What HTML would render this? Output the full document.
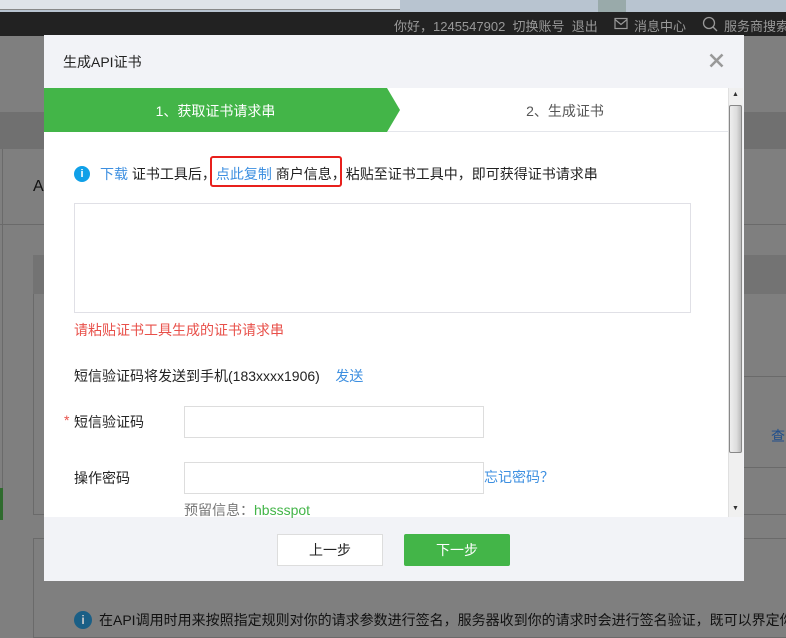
<!DOCTYPE html>
<html><head><meta charset="utf-8"><style>
*{margin:0;padding:0;box-sizing:border-box}
body{width:786px;height:628px;overflow:hidden;position:relative;background:#7f7f7f;font-family:"Liberation Sans","Noto Sans CJK SC",sans-serif;font-size:14px}
.a{position:absolute}
</style></head><body>
<div class="a" style="left:0;top:0;width:786px;height:12px;background:#b8c4d0"></div>
<div class="a" style="left:0;top:0;width:400px;height:10px;background:#dfe3e8;border-bottom:1px solid #888"></div>
<div class="a" style="left:598px;top:0;width:28px;height:12px;background:#9aa"></div>
<div class="a" style="left:0;top:12px;width:786px;height:24px;background:#222"></div>
<div class="a" style="left:394px;top:16px;color:#999;font-size:13px;white-space:nowrap">你好，1245547902 &nbsp;切换账号 &nbsp;退出</div>
<svg class="a" style="left:614px;top:17px" width="14" height="13"><rect x="1" y="1.5" width="12" height="10" fill="none" stroke="#999" stroke-width="1.2"/><path d="M1 2.5 L7 7.5 L13 2.5" fill="none" stroke="#999" stroke-width="1.2"/></svg>
<div class="a" style="left:634px;top:16px;color:#999;font-size:13px;white-space:nowrap">消息中心</div>
<svg class="a" style="left:702px;top:16px" width="16" height="16"><circle cx="7" cy="7" r="5.5" fill="none" stroke="#999" stroke-width="1.3"/><path d="M11 11 L15 15" stroke="#999" stroke-width="1.3"/></svg>
<div class="a" style="left:724px;top:16px;color:#999;font-size:13px;white-space:nowrap">服务商搜索</div>
<div class="a" style="left:0;top:112px;width:786px;height:37px;background:#707070"></div>
<div class="a" style="left:0;top:149px;width:3px;height:370px;border-right:1px solid #6a6a6a"></div>
<div class="a" style="left:33px;top:178px;font-size:16px;color:#111">A</div>
<div class="a" style="left:0;top:224px;width:786px;height:1px;background:#6a6a6a"></div>
<div class="a" style="left:33px;top:255px;width:760px;height:260px;border:1px solid #6a6a6a"></div>
<div class="a" style="left:33px;top:255px;width:760px;height:39px;background:#737373"></div>
<div class="a" style="left:744px;top:376px;width:42px;height:1px;background:#6a6a6a"></div>
<div class="a" style="left:744px;top:467px;width:42px;height:1px;background:#6a6a6a"></div>
<div class="a" style="left:771px;top:426px;color:#1f4e8c;font-size:14px">查</div>
<div class="a" style="left:0;top:488px;width:3px;height:32px;background:#2f6b2e"></div>
<div class="a" style="left:33px;top:538px;width:760px;height:100px;border:1px solid #6a6a6a"></div>
<div class="a" style="left:74px;top:611px;width:18px;height:18px;border-radius:50%;background:#1a5f86;color:#ccc;font-size:12px;text-align:center;line-height:18px;font-weight:bold">i</div>
<div class="a" style="left:99px;top:610px;width:687px;overflow:hidden;color:#111;font-size:14px;white-space:nowrap">在API调用时用来按照指定规则对你的请求参数进行签名，服务器收到你的请求时会进行签名验证，既可以界定你的身份</div>

<div class="a" style="left:44px;top:35px;width:700px;height:546px;background:#f2f3f7">
 <div class="a" style="left:19px;top:17px;font-size:14px;color:#222">生成API证书</div>
 <svg class="a" style="left:665px;top:18px" width="15" height="15"><path d="M1.5 1.5 L13.5 13.5 M13.5 1.5 L1.5 13.5" stroke="#999" stroke-width="2.6"/></svg>
 <div class="a" style="left:0;top:53px;width:685px;height:44px;background:#fff;border-bottom:1px solid #e4e6eb"></div>
 <svg class="a" style="left:0;top:53px" width="360" height="44"><polygon points="0,0 343,0 356,22 343,44 0,44" fill="#43b548"/></svg>
 <div class="a" style="left:0;top:54px;width:343px;height:44px;line-height:44px;text-align:center;color:#fff;font-size:14px">1、获取证书请求串</div>
 <div class="a" style="left:356px;top:54px;width:330px;height:44px;line-height:44px;text-align:center;color:#555;font-size:14px">2、生成证书</div>
 <div class="a" style="left:0;top:97px;width:685px;height:385px;background:#fff"></div>
 <div class="a" style="left:684px;top:53px;width:15px;height:429px;background:#f0f0f0;border-left:1px solid #e0e0e0"></div>
 <div class="a" style="left:688px;top:56px;font-size:7px;color:#333">▲</div>
 <div class="a" style="left:685px;top:70px;width:13px;height:348px;background:linear-gradient(90deg,#eee,#ddd 60%,#bbb);border:1px solid #888;border-radius:2px"></div>
 <div class="a" style="left:688px;top:470px;font-size:7px;color:#333">▼</div>
 <div class="a" style="left:30px;top:131px;width:16px;height:16px;border-radius:50%;background:#10a0e8;color:#fff;font-size:11px;font-weight:bold;text-align:center;line-height:16px">i</div>
 <div class="a" style="left:56px;top:129px;white-space:nowrap;font-size:14px;color:#222"><span style="color:#3d8fe0">下载</span> 证书工具后，<span style="color:#3d8fe0">点此复制</span> 商户信息，粘贴至证书工具中，即可获得证书请求串</div>
 <div class="a" style="left:166px;top:121px;width:132px;height:31px;border:2px solid #e8201c;border-radius:3px"></div>
 <div class="a" style="left:30px;top:168px;width:617px;height:110px;border:1px solid #e0e0e6"></div>
 <div class="a" style="left:30px;top:285px;color:#e8504a;font-size:14px">请粘贴证书工具生成的证书请求串</div>
 <div class="a" style="left:30px;top:331px;color:#222;font-size:14px;white-space:nowrap">短信验证码将发送到手机(183xxxx1906) &nbsp;&nbsp;&nbsp;<span style="color:#3d8fe0">发送</span></div>
 <div class="a" style="left:20px;top:377px;color:#e8504a;font-size:14px">*</div>
 <div class="a" style="left:30px;top:377px;color:#222;font-size:14px">短信验证码</div>
 <div class="a" style="left:140px;top:371px;width:300px;height:32px;border:1px solid #ddd;background:#fff"></div>
 <div class="a" style="left:30px;top:433px;color:#222;font-size:14px">操作密码</div>
 <div class="a" style="left:140px;top:427px;width:300px;height:32px;border:1px solid #ddd;background:#fff"></div>
 <div class="a" style="left:440px;top:432px;color:#3d8fe0;font-size:14px">忘记密码？</div>
 <div class="a" style="left:140px;top:465px;color:#777;font-size:14px">预留信息：<span style="color:#43b548">hbssspot</span></div>
 <div class="a" style="left:233px;top:499px;width:106px;height:32px;background:#fff;border:1px solid #ddd;text-align:center;line-height:30px;color:#222">上一步</div>
 <div class="a" style="left:360px;top:499px;width:106px;height:32px;background:#43b548;border-radius:2px;text-align:center;line-height:32px;color:#fff">下一步</div>
</div>
</body></html>
